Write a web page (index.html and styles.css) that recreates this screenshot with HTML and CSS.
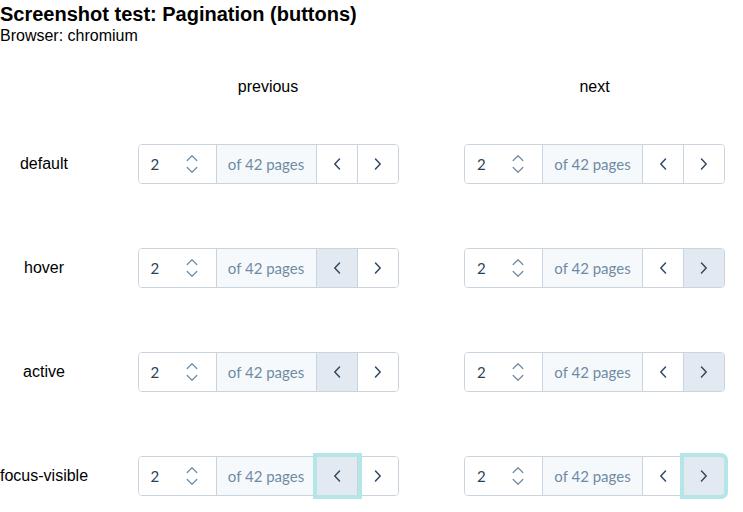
FILE: index.html
```html
<!DOCTYPE html>
<html>
<head>
<meta charset="utf-8">
<link rel="stylesheet" href="styles.css">
</head>
<body>
<h1 class="title">Screenshot test: Pagination (buttons)</h1>
<p class="subtitle">Browser: chromium</p>
<div class="grid">
  <div></div>
  <div class="colhead">previous</div>
  <div class="colhead">next</div>

  <div class="rowlabel">default</div>
  <div class="cell">
    <div class="pager">
      <div class="pg-input"><span class="pg-value">2</span><svg class="updown" width="12" height="20" viewBox="0 0 12 20"><path d="M1.2 6.5 L6 1.8 L10.8 6.5" /><path d="M1.2 13.5 L6 18.2 L10.8 13.5" /></svg></div>
      <div class="pg-label">of 42 pages</div>
      <div class="pg-btn"><svg width="8" height="12" viewBox="0 0 8 12"><path d="M6.5 1 L1.8 6 L6.5 11" /></svg></div>
      <div class="pg-btn last"><svg width="8" height="12" viewBox="0 0 8 12"><path d="M1.5 1 L6.2 6 L1.5 11" /></svg></div>
    </div>
  </div>
  <div class="cell">
    <div class="pager">
      <div class="pg-input"><span class="pg-value">2</span><svg class="updown" width="12" height="20" viewBox="0 0 12 20"><path d="M1.2 6.5 L6 1.8 L10.8 6.5" /><path d="M1.2 13.5 L6 18.2 L10.8 13.5" /></svg></div>
      <div class="pg-label">of 42 pages</div>
      <div class="pg-btn"><svg width="8" height="12" viewBox="0 0 8 12"><path d="M6.5 1 L1.8 6 L6.5 11" /></svg></div>
      <div class="pg-btn last"><svg width="8" height="12" viewBox="0 0 8 12"><path d="M1.5 1 L6.2 6 L1.5 11" /></svg></div>
    </div>
  </div>

  <div class="rowlabel">hover</div>
  <div class="cell">
    <div class="pager">
      <div class="pg-input"><span class="pg-value">2</span><svg class="updown" width="12" height="20" viewBox="0 0 12 20"><path d="M1.2 6.5 L6 1.8 L10.8 6.5" /><path d="M1.2 13.5 L6 18.2 L10.8 13.5" /></svg></div>
      <div class="pg-label">of 42 pages</div>
      <div class="pg-btn hl"><svg width="8" height="12" viewBox="0 0 8 12"><path d="M6.5 1 L1.8 6 L6.5 11" /></svg></div>
      <div class="pg-btn last"><svg width="8" height="12" viewBox="0 0 8 12"><path d="M1.5 1 L6.2 6 L1.5 11" /></svg></div>
    </div>
  </div>
  <div class="cell">
    <div class="pager">
      <div class="pg-input"><span class="pg-value">2</span><svg class="updown" width="12" height="20" viewBox="0 0 12 20"><path d="M1.2 6.5 L6 1.8 L10.8 6.5" /><path d="M1.2 13.5 L6 18.2 L10.8 13.5" /></svg></div>
      <div class="pg-label">of 42 pages</div>
      <div class="pg-btn"><svg width="8" height="12" viewBox="0 0 8 12"><path d="M6.5 1 L1.8 6 L6.5 11" /></svg></div>
      <div class="pg-btn last hl"><svg width="8" height="12" viewBox="0 0 8 12"><path d="M1.5 1 L6.2 6 L1.5 11" /></svg></div>
    </div>
  </div>

  <div class="rowlabel">active</div>
  <div class="cell">
    <div class="pager">
      <div class="pg-input"><span class="pg-value">2</span><svg class="updown" width="12" height="20" viewBox="0 0 12 20"><path d="M1.2 6.5 L6 1.8 L10.8 6.5" /><path d="M1.2 13.5 L6 18.2 L10.8 13.5" /></svg></div>
      <div class="pg-label">of 42 pages</div>
      <div class="pg-btn hl"><svg width="8" height="12" viewBox="0 0 8 12"><path d="M6.5 1 L1.8 6 L6.5 11" /></svg></div>
      <div class="pg-btn last"><svg width="8" height="12" viewBox="0 0 8 12"><path d="M1.5 1 L6.2 6 L1.5 11" /></svg></div>
    </div>
  </div>
  <div class="cell">
    <div class="pager">
      <div class="pg-input"><span class="pg-value">2</span><svg class="updown" width="12" height="20" viewBox="0 0 12 20"><path d="M1.2 6.5 L6 1.8 L10.8 6.5" /><path d="M1.2 13.5 L6 18.2 L10.8 13.5" /></svg></div>
      <div class="pg-label">of 42 pages</div>
      <div class="pg-btn"><svg width="8" height="12" viewBox="0 0 8 12"><path d="M6.5 1 L1.8 6 L6.5 11" /></svg></div>
      <div class="pg-btn last hl"><svg width="8" height="12" viewBox="0 0 8 12"><path d="M1.5 1 L6.2 6 L1.5 11" /></svg></div>
    </div>
  </div>

  <div class="rowlabel">focus-visible</div>
  <div class="cell">
    <div class="pager">
      <div class="pg-input"><span class="pg-value">2</span><svg class="updown" width="12" height="20" viewBox="0 0 12 20"><path d="M1.2 6.5 L6 1.8 L10.8 6.5" /><path d="M1.2 13.5 L6 18.2 L10.8 13.5" /></svg></div>
      <div class="pg-label">of 42 pages</div>
      <div class="pg-btn hl focus"><svg width="8" height="12" viewBox="0 0 8 12"><path d="M6.5 1 L1.8 6 L6.5 11" /></svg></div>
      <div class="pg-btn last"><svg width="8" height="12" viewBox="0 0 8 12"><path d="M1.5 1 L6.2 6 L1.5 11" /></svg></div>
    </div>
  </div>
  <div class="cell">
    <div class="pager">
      <div class="pg-input"><span class="pg-value">2</span><svg class="updown" width="12" height="20" viewBox="0 0 12 20"><path d="M1.2 6.5 L6 1.8 L10.8 6.5" /><path d="M1.2 13.5 L6 18.2 L10.8 13.5" /></svg></div>
      <div class="pg-label">of 42 pages</div>
      <div class="pg-btn"><svg width="8" height="12" viewBox="0 0 8 12"><path d="M6.5 1 L1.8 6 L6.5 11" /></svg></div>
      <div class="pg-btn last hl focus"><svg width="8" height="12" viewBox="0 0 8 12"><path d="M1.5 1 L6.2 6 L1.5 11" /></svg></div>
    </div>
  </div>
</div>
</body>
</html>
```

FILE: styles.css
```css
html, body {
  margin: 0;
  padding: 0;
  background: #ffffff;
  color: #000000;
  font-family: "Liberation Sans", Arial, sans-serif;
}

.title {
  margin: 3px 0 0 0;
  font-size: 20px;
  line-height: 23px;
  font-weight: bold;
}

.subtitle {
  margin: 1px 0 0 0;
  font-size: 16px;
  line-height: 18px;
}

.grid {
  margin-top: 16px;
  display: grid;
  grid-template-columns: 88px 360px 293px;
  grid-template-rows: 51px repeat(4, 104px);
  align-items: center;
  font-size: 16px;
  line-height: 18px;
}

.colhead, .rowlabel {
  text-align: center;
  white-space: nowrap;
}

.cell {
  display: flex;
  justify-content: center;
}

.pager {
  display: flex;
  height: 38px;
  border: 1px solid #c9d4df;
  border-radius: 4px;
  font-family: Lato, "Open Sans", sans-serif;
  font-size: 15px;
}

.pg-input {
  width: 78px;
  display: flex;
  align-items: center;
  justify-content: space-between;
  padding: 0 18px 0 12px;
  box-sizing: border-box;
  background: #ffffff;
  border-radius: 3px 0 0 3px;
  border-right: 1px solid #c9d4df;
  color: #2e4257;
}

.pg-value {
  line-height: 18px;
  margin-top: -1px;
}

.updown path {
  fill: none;
  stroke: #7891a9;
  stroke-width: 1.4;
  stroke-linecap: round;
  stroke-linejoin: round;
}

.pg-label {
  width: 100px;
  display: flex;
  align-items: center;
  justify-content: center;
  padding-bottom: 1px;
  box-sizing: border-box;
  background: #f6f9fb;
  border-right: 1px solid #c9d4df;
  color: #6f8ba6;
}

.pg-btn {
  width: 40px;
  display: flex;
  align-items: center;
  justify-content: center;
  background: #ffffff;
  border-right: 1px solid #c9d4df;
}

.pg-btn.last {
  border-right: none;
  border-radius: 0 3px 3px 0;
}

.pg-btn path {
  fill: none;
  stroke: #34495f;
  stroke-width: 1.5;
  stroke-linecap: round;
  stroke-linejoin: round;
}

.pg-btn.hl {
  background: #e2e9f0;
}

.pg-btn.focus {
  position: relative;
  z-index: 1;
  box-shadow: 0 0 0 4px #b4e6e7;
}
```
